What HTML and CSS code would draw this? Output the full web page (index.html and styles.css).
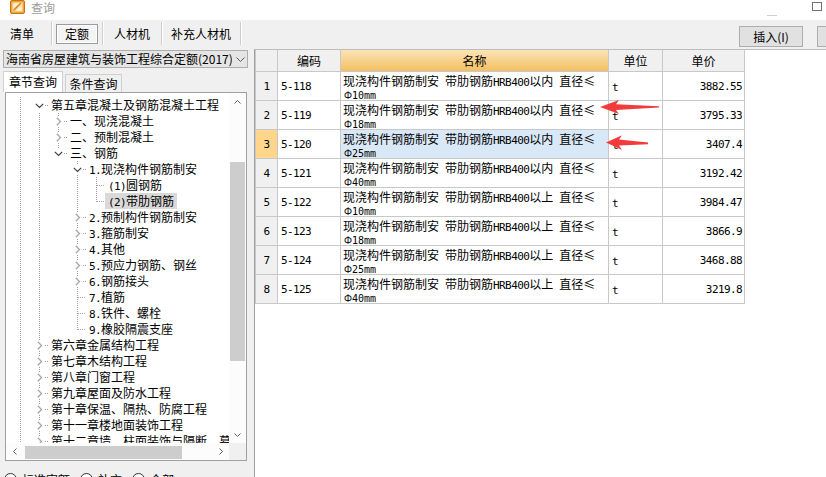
FILE: index.html
```html
<!DOCTYPE html>
<html lang="zh-CN">
<head>
<meta charset="utf-8">
<title>查询</title>
<link rel="stylesheet" href="styles.css">
</head>
<body>
<div class="window">
  <header class="titlebar">
    <svg class="app-icon" viewBox="0 0 15 14" width="15" height="14">
      <rect x="0.5" y="0.5" width="14" height="13" rx="1.5" fill="#f2a33a" stroke="#c87412"/>
      <rect x="2.5" y="2.5" width="10" height="9" fill="#fbe7b5"/>
      <path d="M3.5 10.5 L11 3" stroke="#d9822b" stroke-width="1.6"/>
      <path d="M4 6.5 L7.5 3 M8 11 L11.5 7.5" stroke="#ffffff" stroke-width="1"/>
    </svg>
    <span class="title">查询</span>
    <span class="spacer"></span>
    <span class="win-min"></span>
    <span class="win-max"></span>
  </header>

  <div class="toolbar">
    <div class="tabs">
      <span class="tab tab-1">清单</span>
      <span class="tab tab-2"><span class="pressed">定额</span></span>
      <span class="tab tab-3">人材机</span>
      <span class="tab tab-4">补充人材机</span>
    </div>
    <div class="actions">
      <button class="btn">插入(I)</button>
      <button class="btn btn-cut"></button>
    </div>
  </div>

  <div class="main">
    <aside class="left">
      <div class="combo">
        <span class="combo-text">海南省房屋建筑与装饰工程综合定额(2017)</span>
        <svg class="combo-arrow" width="9" height="5" viewBox="0 0 9 5"><path d="M0.5 0.5 L4.5 4.5 L8.5 0.5" fill="none" stroke="#5a5a5a"/></svg>
      </div>
      <div class="qtabs">
        <span class="qtab active">章节查询</span>
        <span class="qtab">条件查询</span>
      </div>
      <div class="treebox">
        <div class="tree">
          <div class="row"><span class="g v"></span><span class="g x"><svg width="9" height="9" viewBox="0 0 9 9"><path d="M0.8 2.8 L4.5 6.5 L8.2 2.8" fill="none" stroke="#404040" stroke-width="1.2"/></svg></span><span class="lbl">第五章混凝土及钢筋混凝土工程</span></div>
          <div class="row"><span class="g v"></span><span class="g v"></span><span class="g x v"><svg width="9" height="9" viewBox="0 0 9 9"><path d="M2.8 0.8 L6.5 4.5 L2.8 8.2" fill="none" stroke="#a8a8a8" stroke-width="1.3"/></svg></span><span class="lbl">一、现浇混凝土</span></div>
          <div class="row"><span class="g v"></span><span class="g v"></span><span class="g x v"><svg width="9" height="9" viewBox="0 0 9 9"><path d="M2.8 0.8 L6.5 4.5 L2.8 8.2" fill="none" stroke="#a8a8a8" stroke-width="1.3"/></svg></span><span class="lbl">二、预制混凝土</span></div>
          <div class="row"><span class="g v"></span><span class="g v"></span><span class="g x vt"><svg width="9" height="9" viewBox="0 0 9 9"><path d="M0.8 2.8 L4.5 6.5 L8.2 2.8" fill="none" stroke="#404040" stroke-width="1.2"/></svg></span><span class="lbl">三、钢筋</span></div>
          <div class="row"><span class="g v"></span><span class="g v"></span><span class="g"></span><span class="g x v"><svg width="9" height="9" viewBox="0 0 9 9"><path d="M0.8 2.8 L4.5 6.5 L8.2 2.8" fill="none" stroke="#404040" stroke-width="1.2"/></svg></span><span class="lbl"><span class="m">1.</span>现浇构件钢筋制安</span></div>
          <div class="row"><span class="g v"></span><span class="g v"></span><span class="g"></span><span class="g v"></span><span class="g t"></span><span class="lbl"><span class="m">(1)</span>圆钢筋</span></div>
          <div class="row"><span class="g v"></span><span class="g v"></span><span class="g"></span><span class="g v"></span><span class="g tl"></span><span class="lbl sel"><span class="m">(2)</span>带肋钢筋</span></div>
          <div class="row"><span class="g v"></span><span class="g v"></span><span class="g"></span><span class="g x v"><svg width="9" height="9" viewBox="0 0 9 9"><path d="M2.8 0.8 L6.5 4.5 L2.8 8.2" fill="none" stroke="#a8a8a8" stroke-width="1.3"/></svg></span><span class="lbl"><span class="m">2.</span>预制构件钢筋制安</span></div>
          <div class="row"><span class="g v"></span><span class="g v"></span><span class="g"></span><span class="g x v"><svg width="9" height="9" viewBox="0 0 9 9"><path d="M2.8 0.8 L6.5 4.5 L2.8 8.2" fill="none" stroke="#a8a8a8" stroke-width="1.3"/></svg></span><span class="lbl"><span class="m">3.</span>箍筋制安</span></div>
          <div class="row"><span class="g v"></span><span class="g v"></span><span class="g"></span><span class="g x v"><svg width="9" height="9" viewBox="0 0 9 9"><path d="M2.8 0.8 L6.5 4.5 L2.8 8.2" fill="none" stroke="#a8a8a8" stroke-width="1.3"/></svg></span><span class="lbl"><span class="m">4.</span>其他</span></div>
          <div class="row"><span class="g v"></span><span class="g v"></span><span class="g"></span><span class="g x v"><svg width="9" height="9" viewBox="0 0 9 9"><path d="M2.8 0.8 L6.5 4.5 L2.8 8.2" fill="none" stroke="#a8a8a8" stroke-width="1.3"/></svg></span><span class="lbl"><span class="m">5.</span>预应力钢筋、钢丝</span></div>
          <div class="row"><span class="g v"></span><span class="g v"></span><span class="g"></span><span class="g x v"><svg width="9" height="9" viewBox="0 0 9 9"><path d="M2.8 0.8 L6.5 4.5 L2.8 8.2" fill="none" stroke="#a8a8a8" stroke-width="1.3"/></svg></span><span class="lbl"><span class="m">6.</span>钢筋接头</span></div>
          <div class="row"><span class="g v"></span><span class="g v"></span><span class="g"></span><span class="g t"></span><span class="lbl"><span class="m">7.</span>植筋</span></div>
          <div class="row"><span class="g v"></span><span class="g v"></span><span class="g"></span><span class="g t"></span><span class="lbl"><span class="m">8.</span>铁件、螺栓</span></div>
          <div class="row"><span class="g v"></span><span class="g v"></span><span class="g"></span><span class="g tl"></span><span class="lbl"><span class="m">9.</span>橡胶隔震支座</span></div>
          <div class="row"><span class="g v"></span><span class="g x v"><svg width="9" height="9" viewBox="0 0 9 9"><path d="M2.8 0.8 L6.5 4.5 L2.8 8.2" fill="none" stroke="#a8a8a8" stroke-width="1.3"/></svg></span><span class="lbl">第六章金属结构工程</span></div>
          <div class="row"><span class="g v"></span><span class="g x v"><svg width="9" height="9" viewBox="0 0 9 9"><path d="M2.8 0.8 L6.5 4.5 L2.8 8.2" fill="none" stroke="#a8a8a8" stroke-width="1.3"/></svg></span><span class="lbl">第七章木结构工程</span></div>
          <div class="row"><span class="g v"></span><span class="g x v"><svg width="9" height="9" viewBox="0 0 9 9"><path d="M2.8 0.8 L6.5 4.5 L2.8 8.2" fill="none" stroke="#a8a8a8" stroke-width="1.3"/></svg></span><span class="lbl">第八章门窗工程</span></div>
          <div class="row"><span class="g v"></span><span class="g x v"><svg width="9" height="9" viewBox="0 0 9 9"><path d="M2.8 0.8 L6.5 4.5 L2.8 8.2" fill="none" stroke="#a8a8a8" stroke-width="1.3"/></svg></span><span class="lbl">第九章屋面及防水工程</span></div>
          <div class="row"><span class="g v"></span><span class="g x v"><svg width="9" height="9" viewBox="0 0 9 9"><path d="M2.8 0.8 L6.5 4.5 L2.8 8.2" fill="none" stroke="#a8a8a8" stroke-width="1.3"/></svg></span><span class="lbl">第十章保温、隔热、防腐工程</span></div>
          <div class="row"><span class="g v"></span><span class="g x v"><svg width="9" height="9" viewBox="0 0 9 9"><path d="M2.8 0.8 L6.5 4.5 L2.8 8.2" fill="none" stroke="#a8a8a8" stroke-width="1.3"/></svg></span><span class="lbl">第十一章楼地面装饰工程</span></div>
          <div class="row"><span class="g v"></span><span class="g x v"><svg width="9" height="9" viewBox="0 0 9 9"><path d="M2.8 0.8 L6.5 4.5 L2.8 8.2" fill="none" stroke="#a8a8a8" stroke-width="1.3"/></svg></span><span class="lbl">第十二章墙、柱面装饰与隔断、幕墙工程</span></div>
        </div>
        <div class="vscroll">
          <span class="sb-btn"><svg width="7" height="4" viewBox="0 0 7 4"><path d="M0.5 3.5 L3.5 0.5 L6.5 3.5" fill="none" stroke="#606060"/></svg></span>
          <span class="vtrack"><span class="vthumb"></span></span>
          <span class="sb-btn"><svg width="7" height="4" viewBox="0 0 7 4"><path d="M0.5 0.5 L3.5 3.5 L6.5 0.5" fill="none" stroke="#606060"/></svg></span>
        </div>
        <div class="hscroll">
          <span class="sb-btn"><svg width="4" height="7" viewBox="0 0 4 7"><path d="M3.5 0.5 L0.5 3.5 L3.5 6.5" fill="none" stroke="#606060"/></svg></span>
          <span class="htrack"><span class="hthumb"></span></span>
          <span class="sb-btn"><svg width="4" height="7" viewBox="0 0 4 7"><path d="M0.5 0.5 L3.5 3.5 L0.5 6.5" fill="none" stroke="#606060"/></svg></span>
        </div>
        <div class="corner"></div>
      </div>
      <div class="radios">
        <span class="radio"><span class="dot"></span>标准定额</span>
        <span class="radio"><span class="dot"></span>补充</span>
        <span class="radio"><span class="dot"></span>全部</span>
      </div>
    </aside>

    <section class="right">
      <div class="grid">
        <div class="c hd"></div>
        <div class="c hd">编码</div>
        <div class="c hd hd-name">名称</div>
        <div class="c hd">单位</div>
        <div class="c hd">单价</div>

        <div class="c num">1</div>
        <div class="c code">5-118</div>
        <div class="c name"><span class="l1">现浇构件钢筋制安<span class="m"> </span>带肋钢筋<span class="m">HRB400</span>以内<span class="m"> </span>直径≤</span><span class="l2"><span class="phi">Φ</span><span class="m2">10mm</span></span></div>
        <div class="c unit">t</div>
        <div class="c price">3882.55</div>

        <div class="c num">2</div>
        <div class="c code">5-119</div>
        <div class="c name"><span class="l1">现浇构件钢筋制安<span class="m"> </span>带肋钢筋<span class="m">HRB400</span>以内<span class="m"> </span>直径≤</span><span class="l2"><span class="phi">Φ</span><span class="m2">18mm</span></span></div>
        <div class="c unit">t</div>
        <div class="c price">3795.33</div>

        <div class="c num sel">3</div>
        <div class="c code">5-120</div>
        <div class="c name sel"><span class="l1">现浇构件钢筋制安<span class="m"> </span>带肋钢筋<span class="m">HRB400</span>以内<span class="m"> </span>直径≤</span><span class="l2"><span class="phi">Φ</span><span class="m2">25mm</span></span></div>
        <div class="c unit">t</div>
        <div class="c price">3407.4</div>

        <div class="c num">4</div>
        <div class="c code">5-121</div>
        <div class="c name"><span class="l1">现浇构件钢筋制安<span class="m"> </span>带肋钢筋<span class="m">HRB400</span>以内<span class="m"> </span>直径≤</span><span class="l2"><span class="phi">Φ</span><span class="m2">40mm</span></span></div>
        <div class="c unit">t</div>
        <div class="c price">3192.42</div>

        <div class="c num">5</div>
        <div class="c code">5-122</div>
        <div class="c name"><span class="l1">现浇构件钢筋制安<span class="m"> </span>带肋钢筋<span class="m">HRB400</span>以上<span class="m"> </span>直径≤</span><span class="l2"><span class="phi">Φ</span><span class="m2">10mm</span></span></div>
        <div class="c unit">t</div>
        <div class="c price">3984.47</div>

        <div class="c num">6</div>
        <div class="c code">5-123</div>
        <div class="c name"><span class="l1">现浇构件钢筋制安<span class="m"> </span>带肋钢筋<span class="m">HRB400</span>以上<span class="m"> </span>直径≤</span><span class="l2"><span class="phi">Φ</span><span class="m2">18mm</span></span></div>
        <div class="c unit">t</div>
        <div class="c price">3866.9</div>

        <div class="c num">7</div>
        <div class="c code">5-124</div>
        <div class="c name"><span class="l1">现浇构件钢筋制安<span class="m"> </span>带肋钢筋<span class="m">HRB400</span>以上<span class="m"> </span>直径≤</span><span class="l2"><span class="phi">Φ</span><span class="m2">25mm</span></span></div>
        <div class="c unit">t</div>
        <div class="c price">3468.88</div>

        <div class="c num">8</div>
        <div class="c code">5-125</div>
        <div class="c name"><span class="l1">现浇构件钢筋制安<span class="m"> </span>带肋钢筋<span class="m">HRB400</span>以上<span class="m"> </span>直径≤</span><span class="l2"><span class="phi">Φ</span><span class="m2">40mm</span></span></div>
        <div class="c unit">t</div>
        <div class="c price">3219.8</div>
      </div>
    </section>
  </div>
</div>

<svg class="arrows" width="826" height="477" viewBox="0 0 826 477">
  <path d="M600 107 L619 100 L616 104.2 L659 106.2 L659 107.6 L616 110 L619 114 Z" fill="#f23c3c"/>
  <path d="M606 142.5 L622 135.2 L619 139.6 L648 142.6 L648 144.2 L619 145.6 L622 150 Z" fill="#f23c3c"/>
</svg>
</body>
</html>
```

FILE: styles.css
```css
* { box-sizing: border-box; }

html, body {
  margin: 0;
  padding: 0;
}

body {
  width: 826px;
  height: 477px;
  overflow: hidden;
  position: relative;
  background: #f0f0f0;
  font-family: "Noto Sans CJK SC", "Noto Sans", sans-serif;
  font-size: 12px;
  color: #000;
  --dotv: repeating-linear-gradient(to bottom, #a0a0a0 0 1px, transparent 1px 2px);
  --doth: repeating-linear-gradient(to right, #a0a0a0 0 1px, transparent 1px 2px);
}

.window {
  width: 826px;
  height: 477px;
  display: flex;
  flex-direction: column;
  overflow: hidden;
}

/* title bar */
.titlebar {
  height: 20px;
  flex: none;
  background: #fff;
  display: flex;
  align-items: flex-start;
}
.app-icon {
  margin-left: 10px;
  flex: none;
}
.title {
  margin-left: 6px;
  margin-top: 1px;
  line-height: 14px;
  color: #9a9a9a;
}
.spacer { flex: 1; }
.win-min {
  width: 10px;
  height: 1px;
  background: #cfcfcf;
  margin-top: 15px;
}
.win-max {
  width: 10px;
  height: 9px;
  border: 1px solid #707070;
  margin: 2px 4px 0 35px;
}

/* toolbar */
.toolbar {
  height: 29px;
  flex: none;
  display: flex;
  align-items: flex-start;
}
.tabs {
  display: flex;
  margin-top: 2px;
  height: 23px;
}
.tab {
  display: flex;
  align-items: center;
  justify-content: center;
  border-right: 1px solid #cdcdcd;
  box-shadow: 1px 0 0 #fff;
  white-space: nowrap;
}
.tab-1 { width: 52px; justify-content: flex-start; padding-left: 10px; }
.tab-2 { width: 51px; }
.tab-3 { width: 59px; }
.tab-4 { width: 79px; }
.pressed {
  width: 42px;
  height: 20px;
  display: flex;
  align-items: center;
  justify-content: center;
  border: 1px solid #9b9b9b;
  box-shadow: inset 0 0 0 1px #fdfdfd;
  background: #f4f4f4;
}
.actions {
  margin-left: auto;
  margin-top: 6px;
  display: flex;
}
.btn {
  height: 21px;
  width: 64px;
  padding: 0;
  border: 1px solid #adadad;
  background: #e1e1e1;
  font: inherit;
  color: #000;
  display: flex;
  align-items: center;
  justify-content: center;
}
.btn-cut {
  width: 9px;
  margin-left: 14px;
  border-right: none;
}

/* main */
.main {
  flex: 1;
  display: flex;
  min-height: 0;
}
.left {
  width: 254px;
  flex: none;
  display: flex;
  flex-direction: column;
}
.combo {
  margin: 1px 6px 0 3px;
  height: 18px;
  border: 1px solid #adadad;
  background: #e5e5e5;
  display: flex;
  align-items: center;
  padding-left: 2px;
}
.combo-text {
  flex: 1;
  overflow: hidden;
  white-space: nowrap;
  line-height: 16px;
}
.combo-arrow {
  flex: none;
  margin: 0 2px 0 4px;
}
.qtabs {
  display: flex;
  align-items: flex-end;
  margin-top: 3px;
  height: 21px;
  padding-left: 3px;
}
.qtab {
  height: 18px;
  width: 57px;
  margin-left: 2px;
  border: 1px solid #d0d0d0;
  border-bottom: none;
  background: #f0f0f0;
  display: flex;
  align-items: center;
  justify-content: center;
  line-height: 16px;
}
.qtab.active {
  height: 21px;
  width: 60px;
  margin-left: 0;
  background: #fff;
}

/* tree box */
.treebox {
  margin-left: 5px;
  width: 242px;
  height: 369px;
  flex: none;
  border: 1px solid #a0a0a0;
  background: #fff;
  display: grid;
  grid-template-columns: 1fr 17px;
  grid-template-rows: 1fr 17px;
}
.tree {
  overflow: hidden;
  padding-top: 4px;
  min-width: 0;
}
.row {
  display: flex;
  height: 16px;
  padding-left: 4px;
  white-space: nowrap;
}
.g {
  width: 19px;
  height: 16px;
  flex: none;
  display: flex;
  align-items: center;
  background-repeat: no-repeat;
  background-image: var(--vl, none), var(--hl, none);
  background-size: 1px var(--vh, 16px), var(--hw, 9px) 1px;
  background-position: 10px 0, var(--hx, 11px) 8px;
}
.v { --vl: var(--dotv); }
.vt { --vl: var(--dotv); --vh: 8px; }
.x { --hl: var(--doth); --hx: 16px; --hw: 3px; }
.x svg {
  margin-left: 6px;
  background: #fff;
}
.t { --vl: var(--dotv); --hl: var(--doth); }
.tl { --vl: var(--dotv); --vh: 9px; --hl: var(--doth); }
.lbl {
  padding: 0 3px;
  line-height: 16px;
}
.lbl.sel { background: #d9d9d9; }

.vscroll {
  display: flex;
  flex-direction: column;
  background: #fcfcfc;
}
.sb-btn {
  flex: none;
  width: 17px;
  height: 17px;
  display: flex;
  align-items: center;
  justify-content: center;
}
.vtrack {
  flex: 1;
  padding-top: 52px;
}
.vthumb {
  display: block;
  height: 199px;
  margin: 0 1px;
  background: #cdcdcd;
}
.hscroll {
  display: flex;
  background: #fcfcfc;
}
.htrack {
  flex: 1;
  padding-left: 2px;
}
.hthumb {
  display: block;
  width: 157px;
  height: 13px;
  margin-top: 3px;
  background: #cdcdcd;
}
.corner { background: #f0f0f0; }

.radios {
  display: flex;
  padding: 12px 0 0 4px;
}
.radio {
  display: flex;
  align-items: flex-start;
  gap: 5px;
  margin-right: 10px;
  line-height: 13px;
}
.dot {
  width: 13px;
  height: 13px;
  border: 1px solid #333;
  border-radius: 50%;
  background: #fff;
}

/* right panel */
.right {
  flex: 1;
  background: #fff;
  border-left: 1px solid #a0a0a0;
  border-top: 1px solid #bcbcbc;
}
.grid {
  display: grid;
  width: max-content;
  grid-template-columns: 21px 62px 267px 53px 81px;
  grid-template-rows: 21px repeat(8, 28px);
  gap: 1px;
  padding: 0 1px 1px 1px;
  background: #c8c8c8;
}
.c {
  background: #fff;
  display: flex;
  align-items: center;
  white-space: nowrap;
  overflow: hidden;
}
.hd {
  background: #f0f0f0;
  justify-content: center;
  line-height: 14px;
}
.hd-name {
  background: linear-gradient(to bottom, #fbe4b6, #f4bf62);
}
.num, .code, .unit, .price, .m {
  font-family: "DejaVu Sans Mono", "Liberation Mono", monospace;
  font-size: 11px;
  letter-spacing: -0.6px;
}
.num {
  background: #f0f0f0;
  justify-content: center;
}
.num.sel { background: #ffd68c; }
.code { padding-left: 3px; }
.unit { padding: 2px 0 0 3px; }
.price {
  justify-content: flex-end;
  padding-right: 2px;
}
.name {
  flex-direction: column;
  align-items: flex-start;
  justify-content: flex-start;
  padding: 3px 0 0 2px;
}
.name.sel { background: #d9e8f7; }
.l1 {
  display: block;
  line-height: 12px;
}
.l2 {
  display: block;
  line-height: 10px;
  padding-left: 1px;
}
.phi {
  font-size: 10px;
}
.m2 {
  font-family: "DejaVu Sans Mono", "Liberation Mono", monospace;
  font-size: 10px;
}

.arrows {
  position: absolute;
  left: 0;
  top: 0;
  pointer-events: none;
}
```
